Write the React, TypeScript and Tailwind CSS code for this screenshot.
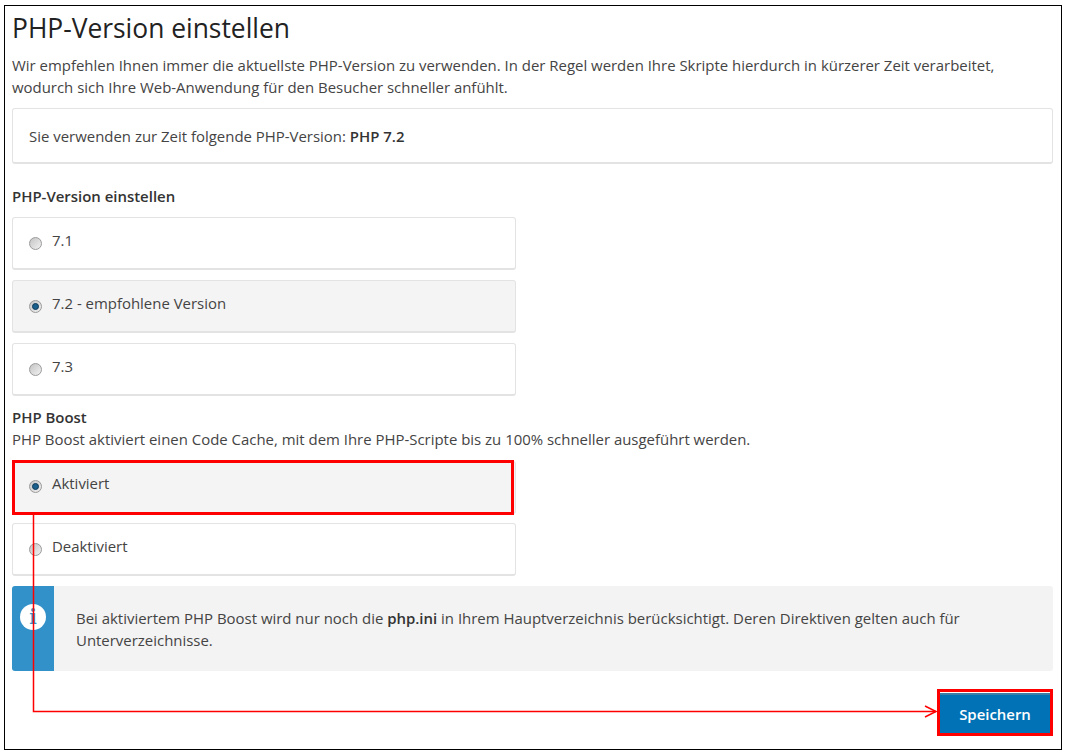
import React from "react";

function Radio({ on }: { on?: boolean }) {
  return (
    <span className="w-[13px] h-[13px] rounded-full border border-[#9a9a9a] bg-gradient-to-br from-[#c4c4c4] to-[#f2f2f2] flex items-center justify-center shrink-0 mt-[7px]">
      {on && <span className="w-[7px] h-[7px] rounded-full bg-[#1b5f8c] border border-[#0d3a58]" />}
    </span>
  );
}

function Option({ label, on, mb = "mb-[10px]", pb = "pb-[6px]" }: { label: string; on?: boolean; mb?: string; pb?: string }) {
  return (
    <div className={`w-[504px] h-[53px] rounded-[3px] border border-[#e3e3e3] border-b-2 flex items-center gap-[10px] pl-[16px] ${pb} ${on ? "bg-[#f4f4f4]" : "bg-white"} ${mb}`}>
      <Radio on={on} />
      <span>{label}</span>
    </div>
  );
}

export default function App() {
  return (
    <div className="relative w-[1068px] h-[753px] bg-white overflow-hidden pt-[5px] pl-[4px] text-[#444] text-[14.95px] leading-[22px] font-['Open_Sans',sans-serif]">
      <div className="w-[1058px] h-[745px] border border-black pl-[7px] pr-[7px]">
        <h1 className="text-[26.4px] leading-[34px] mt-[5px] mb-[9px] text-[#222]">PHP-Version einstellen</h1>
        <p className="mb-[10px]">
          Wir empfehlen Ihnen immer die aktuellste PHP-Version zu verwenden. In der Regel werden Ihre Skripte hierdurch in kürzerer Zeit verarbeitet,
          <br />
          wodurch sich Ihre Web-Anwendung für den Besucher schneller anfühlt.
        </p>
        <div className="h-[56px] w-[1041px] rounded-[3px] border border-[#e3e3e3] border-b-2 flex items-center pl-[16px] mb-[21px]">
          <span>
            Sie verwenden zur Zeit folgende PHP-Version: <b className="font-semibold text-[#333]">PHP 7.2</b>
          </span>
        </div>
        <div className="font-semibold text-[#333] mb-[10px]">PHP-Version einstellen</div>
        <Option label="7.1" />
        <Option label="7.2 - empfohlene Version" on />
        <Option label="7.3" />
        <div className="font-semibold text-[#333]">PHP Boost</div>
        <div className="mb-[11px]">PHP Boost aktiviert einen Code Cache, mit dem Ihre PHP-Scripte bis zu 100% schneller ausgeführt werden.</div>
        <Option label="Aktiviert" on mb="mb-[9px]" pb="pb-[8px]" />
        <Option label="Deaktiviert" />
        <div className="w-[1041px] h-[85px] rounded-[3px] bg-[#f3f3f3] flex overflow-hidden">
          <div className="w-[42px] bg-[#3291c9] flex justify-center pt-[18px] shrink-0">
            <span className="w-[26px] h-[26px] rounded-full bg-white text-[#3291c9] flex items-center justify-center font-['DejaVu_Serif',serif] font-bold text-[20px] leading-none">i</span>
          </div>
          <div className="pl-[22px] pt-[21px] pr-[80px]">
            Bei aktiviertem PHP Boost wird nur noch die <b className="font-semibold text-[#333]">php.ini</b> in Ihrem Hauptverzeichnis berücksichtigt. Deren Direktiven gelten auch für Unterverzeichnisse.
          </div>
        </div>
        <div className="flex justify-end pr-[3px] mt-[22px]">
          <button className="w-[112px] h-[43px] bg-[#0072b5] border-t-2 border-[#3c7ea6] pb-[4px] text-white font-semibold text-[14.95px]">Speichern</button>
        </div>
      </div>

      <div className="absolute left-[12px] top-[460px] w-[502px] h-[55px] border-[3px] border-[#f00] pointer-events-none" />
      <div className="absolute left-[937px] top-[689px] w-[116px] h-[47px] border-[3px] border-[#f00] pointer-events-none" />
      <svg className="absolute left-0 top-0 pointer-events-none" width="1068" height="753" fill="none" stroke="#f00">
        <path d="M33.5 515V711.5H936" strokeWidth="1.5" />
        <path d="M925 706L936 711.5L925 717" strokeWidth="1.5" />
      </svg>
    </div>
  );
}
